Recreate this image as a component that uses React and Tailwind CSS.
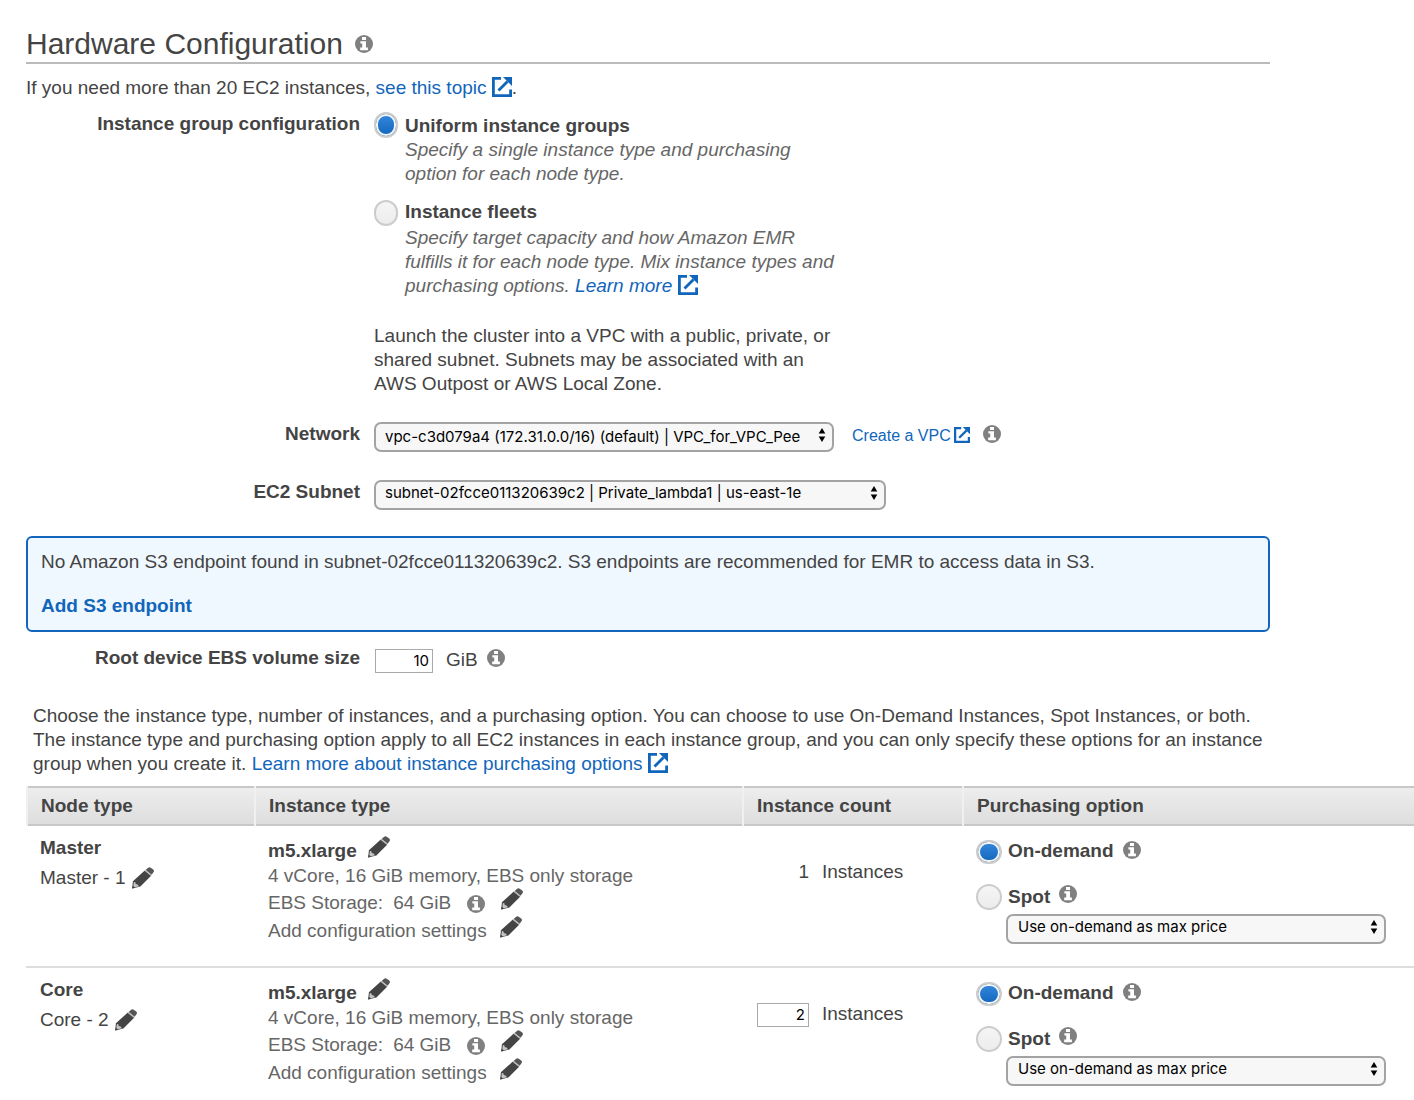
import React, { useState } from "react";

function InfoIcon() {
  return (
    <svg viewBox="0 0 18 18" className="block size-[18px] shrink-0" aria-hidden="true">
      <circle cx="9" cy="9" r="9" fill="#808080" />
      <path d="M7 2h4v3H7zM5.4 6.2H11v6.4h1.9v2.6H5.2v-2.6h2V8.4H5.4z" fill="#fff" />
    </svg>
  );
}

function Info({ label }) {
  return (
    <button type="button" aria-label={label} className="block shrink-0">
      <InfoIcon />
    </button>
  );
}

function ExternalIcon({ className = "size-5" }) {
  return (
    <svg viewBox="0 0 20 20" className={`inline-block ${className}`} fill="none" stroke="#1166bb" aria-hidden="true">
      <path d="M9 1.4H1.4v17.2h17.2V12.5" strokeWidth="2.8" />
      <path d="M6.5 13.5 15.5 4.5" strokeWidth="2.8" />
      <path d="M11 0H20v9z" fill="#1166bb" stroke="none" />
    </svg>
  );
}

function Pencil({ label }) {
  return (
    <button type="button" aria-label={label} className="block shrink-0">
      <svg viewBox="0 0 22 22" className="block size-[22px]" aria-hidden="true">
        <path d="M13.6 3 16.2.7q1.2-1 2.5 0l2.5 1.9q1.4 1.2.3 2.7L19.6 7.8z" fill="#555" />
        <path d="M12.8 3.6 19.4 8.6 8.4 19.4.2 21.6.9 14.2z" fill="#444" />
        <path d="M13.2 3.6 19 8.2" stroke="#b5b5b5" strokeWidth="1.3" />
        <path d="M1.9 15 1 20.8l6-1.6-1.4-1.6-1.9-.5-.3-1.9z" fill="#c4c4c4" />
        <path d="M.8 18.4 3.2 20.8.2 21.6z" fill="#444" />
      </svg>
    </button>
  );
}

function Select({ id, label, options, wrapClass, selectClass }) {
  return (
    <div className={`relative ${wrapClass}`}>
      <select
        id={id}
        aria-label={label}
        className={`block h-[30px] w-full appearance-none rounded-[7px] border-2 border-[#a3a3a3] bg-[#f7f7f7] font-['Inter',sans-serif] text-[15px] leading-5 text-black ${selectClass}`}
      >
        {options.map((o) => (
          <option key={o}>{o}</option>
        ))}
      </select>
      <svg viewBox="0 0 8 14" className="pointer-events-none absolute top-[6px] right-2 h-[14px] w-2" aria-hidden="true">
        <path d="M4 0 7.3 5.6H.7zM4 14 .7 8.4h6.6z" fill="#000" />
      </svg>
    </div>
  );
}

const radioBase =
  "block shrink-0 appearance-none rounded-full border-2 border-[#cccccc] bg-linear-to-b from-[#f5f5f5] to-[#ececec] checked:from-[#3388dd] checked:to-[#1166bb] checked:shadow-[inset_0_0_0_2px_#f6f6f6]";

const link = "text-[#1166bb]";

const numberBox =
  "h-6 border border-[#aaaaaa] bg-white pr-[3px] text-right font-['Inter',sans-serif] text-[15px] text-black";

function NodeRow({ name, count, editable, last }) {
  const [option, setOption] = useState("on-demand");
  const key = name.toLowerCase();
  const cell = last ? "" : "h-[142px] border-b-2 border-[#dddddd]";
  return (
    <tr className="align-top">
      <td className={`pt-[10px] pl-[14px] ${cell}`}>
        <div className="font-bold">{name}</div>
        <div className="mt-[6px] flex gap-[6px]">
          <span>
            {name} - {count}
          </span>
          <Pencil label={`Rename ${name}`} />
        </div>
      </td>
      <td className={`pt-[13px] pl-[14px] text-[#666666] ${cell}`}>
        <div className="flex h-[25px] gap-[11px]">
          <span className="font-bold text-[#444444]">m5.xlarge</span>
          <div className="-mt-[3px]"><Pencil label="Edit instance type" /></div>
        </div>
        <div className="h-[27px]">4 vCore, 16 GiB memory, EBS only storage</div>
        <div className="flex h-7">
          <span>EBS Storage:</span>
          <span className="ml-[10px]">64 GiB</span>
          <div className="mt-1 ml-4"><Info label="About EBS storage" /></div>
          <div className="-mt-[3px] ml-4"><Pencil label="Edit EBS storage" /></div>
        </div>
        <div className="flex gap-[13px]">
          <span>Add configuration settings</span>
          <div className="-mt-[3px]"><Pencil label="Edit configuration settings" /></div>
        </div>
      </td>
      <td className={`pt-[34px] pl-[15px] ${cell}`}>
        <div className="flex gap-[13px]">
          {editable ? (
            <input
              id={`${key}-count`}
              aria-label={`${name} instance count`}
              defaultValue={count}
              className={`mt-px w-[52px] ${numberBox}`}
            />
          ) : (
            <span className="w-[52px] text-right">{count}</span>
          )}
          <span>Instances</span>
        </div>
      </td>
      <td className={`pt-[13px] pl-[14px] ${cell}`}>
        <div className="flex">
          <input
            type="radio"
            id={`${key}-ondemand`}
            name={`${key}-purchase`}
            checked={option === "on-demand"}
            onChange={() => setOption("on-demand")}
            className={`mt-px h-6 w-[26px] ${radioBase}`}
          />
          <label htmlFor={`${key}-ondemand`} className="ml-[6px] font-bold">
            On-demand
          </label>
          <div className="mt-[2px] ml-[9px]"><Info label="About On-demand" /></div>
        </div>
        <div className="mt-[21px] flex">
          <input
            type="radio"
            id={`${key}-spot`}
            name={`${key}-purchase`}
            checked={option === "spot"}
            onChange={() => setOption("spot")}
            className={`-mt-px size-[26px] ${radioBase}`}
          />
          <label htmlFor={`${key}-spot`} className="ml-[6px] font-bold">
            Spot
          </label>
          <div className="ml-[9px]"><Info label="About Spot" /></div>
        </div>
        <Select
          id={`${key}-price`}
          label={`${name} maximum price`}
          options={["Use on-demand as max price", "Set max $/hr"]}
          wrapClass="mt-1 mr-7 ml-[30px]"
          selectClass="pr-6 pb-1 pl-[10px]"
        />
      </td>
    </tr>
  );
}

const headCell = "h-10 border-l-2 border-[#f0f0f0] pl-[13px]";

export default function App() {
  const [group, setGroup] = useState("uniform");
  return (
    <main className="overflow-x-hidden bg-white pt-6 pb-[14px] pl-[26px] font-['Liberation_Sans',Arial,sans-serif] text-[19px] leading-6 text-[#444444]">
      <div className="mr-36">
        <header className="flex h-10 items-center gap-3 border-b-2 border-[#bbbbbb] pt-[2px]">
          <h1 className="text-[30px] leading-9">Hardware Configuration</h1>
          <Info label="About hardware configuration" />
        </header>

        <p className="mt-3">
          If you need more than 20 EC2 instances,{" "}
          <a href="#limits" className={link}>
            see this topic <ExternalIcon className="size-5 align-[-3px]" />
          </a>
          .
        </p>

        <div className="mt-3 grid grid-cols-[334px_1fr] gap-x-[14px]">
          <div className="text-right font-bold">Instance group configuration</div>
          <div>
            <div className="flex">
              <input
                type="radio"
                id="uniform"
                name="group"
                checked={group === "uniform"}
                onChange={() => setGroup("uniform")}
                className={`h-[26px] w-6 ${radioBase}`}
              />
              <div className="ml-[7px] max-w-[430px] pt-[2px]">
                <label htmlFor="uniform" className="block font-bold">
                  Uniform instance groups
                </label>
                <p className="text-[#666666] italic">
                  Specify a single instance type and purchasing option for each node type.
                </p>
              </div>
            </div>
            <div className="mt-[14px] flex">
              <input
                type="radio"
                id="fleets"
                name="group"
                checked={group === "fleets"}
                onChange={() => setGroup("fleets")}
                className={`h-[26px] w-6 ${radioBase}`}
              />
              <div className="ml-[7px] max-w-[440px]">
                <label htmlFor="fleets" className="block font-bold">
                  Instance fleets
                </label>
                <p className="mt-[2px] text-[#666666] italic">
                  Specify target capacity and how Amazon EMR fulfills it for each node type. Mix instance types and
                  purchasing options.{" "}
                  <a href="#fleets" className={link}>
                    Learn more <ExternalIcon className="size-5 align-[-3px]" />
                  </a>
                </p>
              </div>
            </div>
            <p className="mt-[26px] max-w-[460px]">
              Launch the cluster into a VPC with a public, private, or shared subnet. Subnets may be associated with an
              AWS Outpost or AWS Local Zone.
            </p>
          </div>

          <label htmlFor="network" className="mt-[26px] text-right font-bold">
            Network
          </label>
          <div className="mt-[26px] flex">
            <Select
              id="network"
              label="Network"
              options={["vpc-c3d079a4 (172.31.0.0/16) (default) | VPC_for_VPC_Pee"]}
              wrapClass="w-[460px]"
              selectClass="pr-4 pl-[9px]"
            />
            <a href="#vpc" className={`ml-[18px] flex gap-[3px] pt-[2px] text-base leading-6 ${link}`}>
              Create a VPC
              <ExternalIcon className="mt-[3px] size-4" />
            </a>
            <div className="mt-[3px] ml-[13px]"><Info label="About network" /></div>
          </div>

          <label htmlFor="subnet" className="mt-7 text-right font-bold">
            EC2 Subnet
          </label>
          <Select
            id="subnet"
            label="EC2 Subnet"
            options={["subnet-02fcce011320639c2 | Private_lambda1 | us-east-1e"]}
            wrapClass="mt-7 w-[512px]"
            selectClass="pr-6 pb-1 pl-[9px]"
          />
        </div>

        <section className="mt-[26px] rounded-[6px] border-2 border-[#1166bb] bg-[#f0f8ff] px-[13px] py-3">
          <p>
            No Amazon S3 endpoint found in subnet-02fcce011320639c2. S3 endpoints are recommended for EMR to access data
            in S3.
          </p>
          <a href="#endpoint" className={`mt-5 block font-bold ${link}`}>
            Add S3 endpoint
          </a>
        </section>

        <div className="mt-[14px] flex">
          <label htmlFor="volume" className="w-[334px] text-right font-bold">
            Root device EBS volume size
          </label>
          <input id="volume" defaultValue="10" className={`mt-[3px] ml-[15px] w-[58px] ${numberBox}`} />
          <span className="ml-[13px] pt-[2px]">GiB</span>
          <div className="mt-[3px] ml-[9px]"><Info label="About volume size" /></div>
        </div>

        <p className="mt-[31px] pl-[7px]">
          Choose the instance type, number of instances, and a purchasing option. You can choose to use On-Demand
          Instances, Spot Instances, or both. The instance type and purchasing option apply to all EC2 instances in each
          instance group, and you can only specify these options for an instance group when you create it.{" "}
          <a href="#purchasing" className={link}>
            Learn more about instance purchasing options <ExternalIcon className="size-5 align-[-3px]" />
          </a>
        </p>
      </div>

      <table className="mt-[10px] w-full table-fixed border-separate border-spacing-0">
        <colgroup>
          <col className="w-[228px]" />
          <col className="w-[488px]" />
          <col className="w-[220px]" />
          <col />
        </colgroup>
        <thead>
          <tr className="bg-linear-to-b from-[#eeeeee] to-[#dddddd] text-left shadow-[inset_0_2px_0_#c8c8c8,inset_0_-2px_0_#c8c8c8]">
            <th className={headCell}>Node type</th>
            <th className={headCell}>Instance type</th>
            <th className={headCell}>Instance count</th>
            <th className={headCell}>Purchasing option</th>
          </tr>
        </thead>
        <tbody>
          <NodeRow name="Master" count={1} />
          <NodeRow name="Core" count={2} editable last />
        </tbody>
      </table>
    </main>
  );
}
